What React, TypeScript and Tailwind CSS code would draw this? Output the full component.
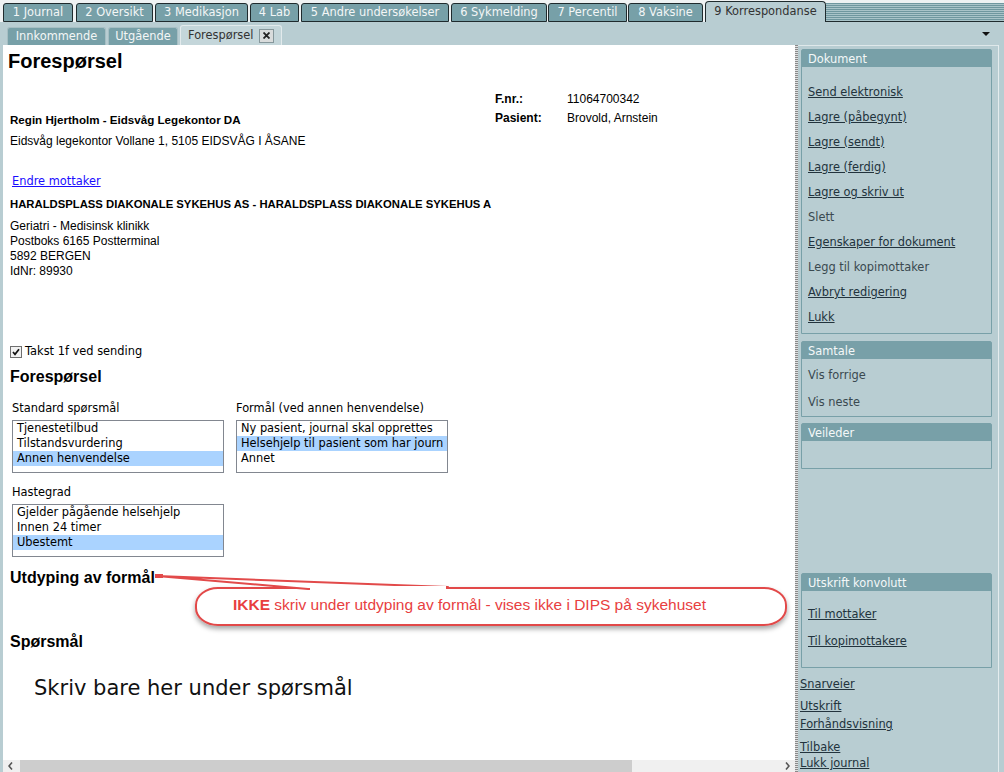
import clsx from "clsx";

const topTabs = [
  { label: "1 Journal", cls: "w-[70px] mr-[3px]" },
  { label: "2 Oversikt", cls: "w-[77px] mr-[2px]" },
  { label: "3 Medikasjon", cls: "w-[93px] mr-[2px]" },
  { label: "4 Lab", cls: "w-[49px] mr-[2px]" },
  { label: "5 Andre undersøkelser", cls: "w-[148px] mr-[2px]" },
  { label: "6 Sykmelding", cls: "w-[96px] mr-[1px]" },
  { label: "7 Percentil", cls: "w-[79px] mr-[1px]" },
  { label: "8 Vaksine", cls: "w-[75px] mr-[2px]" },
];

function ListBox({ items, selected }: { items: string[]; selected: number }) {
  return (
    <div className="w-[212px] h-[53px] border border-[#828790] bg-white overflow-hidden">
      {items.map((it, i) => (
        <div
          key={it}
          className={clsx(
            "h-[15px] leading-[15px] pl-[4px] whitespace-nowrap",
            i === selected && "bg-[#aad3ff]"
          )}
        >
          {it}
        </div>
      ))}
    </div>
  );
}

function PanelBox({
  title,
  className,
  children,
}: {
  title: string;
  className?: string;
  children?: React.ReactNode;
}) {
  return (
    <div className={clsx("w-[191px] border border-[#78a0a8] rounded-t-[2px]", className)}>
      <div className="h-[17px] leading-[18px] bg-[#78a0a8] text-[#f4f8f8] pl-[6px]">
        {title}
      </div>
      {children}
    </div>
  );
}

function Item({ label, link = true, h = "h-[25px]" }: { label: string; link?: boolean; h?: string }) {
  return (
    <div className={clsx("flex items-center pl-[6px]", h)}>
      <span className={link ? "underline text-[#22333d]" : "text-[#3a4950]"}>{label}</span>
    </div>
  );
}

export default function App() {
  return (
    <div className="w-[1004px] h-[772px] overflow-hidden bg-[#b8cdd2] font-['DejaVu_Sans',Verdana,sans-serif] text-[11.4px] flex flex-col">
      {/* Top tabs */}
      <div className="h-[22px] bg-[#eef2f3] flex items-end pl-[3px]">
        {topTabs.map((t) => (
          <div
            key={t.label}
            className={clsx(
              "h-[19px] border border-[#1f2b2e] rounded-t-[3px] bg-[#77a0a8] text-[#f3f6f6] flex items-center justify-center whitespace-nowrap",
              t.cls
            )}
          >
            {t.label}
          </div>
        ))}
        <div className="w-[121px] h-[21px] border border-b-0 border-[#1f2b2e] rounded-t-[4px] bg-[#b8cdd2] text-[#333] flex items-center justify-center">
          9 Korrespondanse
        </div>
        <div className="flex-1 h-[19px] border-b border-[#1f2b2e] bg-[repeating-linear-gradient(180deg,#6f979f_0px,#6f979f_1px,#a9c4c9_1px,#a9c4c9_2px)]" />
      </div>

      {/* Sub tabs */}
      <div className="h-[23px] flex items-end pl-[7px]">
        <div className="w-[99px] h-[18px] mr-[2px] border border-b-0 border-[#a6bec3] rounded-t-[3px] bg-[#77a0a8] text-[#f3f6f6] flex items-center justify-center">
          Innkommende
        </div>
        <div className="w-[70px] h-[18px] mr-[2px] border border-b-0 border-[#a6bec3] rounded-t-[3px] bg-[#77a0a8] text-[#f3f6f6] flex items-center justify-center">
          Utgående
        </div>
        <div className="w-[102px] h-[20px] border border-b-0 border-[#e2eaec] rounded-t-[3px] bg-[#c4d6da] text-[#333] flex items-center pl-[7px]">
          Forespørsel
          <span className="ml-[6px] w-[15px] h-[14px] border border-[#86979b] bg-[#d9dcdc] flex items-center justify-center">
            <svg width="7" height="7" viewBox="0 0 7 7">
              <path d="M0.5 0.5L6.5 6.5M6.5 0.5L0.5 6.5" stroke="#222" strokeWidth="1.8" />
            </svg>
          </span>
        </div>
        <svg className="ml-auto mr-[14px] mb-[9px]" width="8" height="4" viewBox="0 0 8 4">
          <path d="M0 0H8L4 4Z" fill="#111" />
        </svg>
      </div>

      {/* Main */}
      <div className="flex h-[727px]">
        <div className="ml-[3px] w-[792px] bg-white flex flex-col">
          <div className="flex-1 relative overflow-hidden pl-[7px] text-black">
            <div className="font-['Liberation_Sans',Arial,sans-serif] text-[20px] font-bold leading-[24px] mt-[4px] -ml-[2px]">
              Forespørsel
            </div>

            <div className="flex items-start font-['Liberation_Sans',Arial,sans-serif] text-[12px]">
              <div className="w-[485px] pt-[39px]">
                <div className="font-bold text-[11.6px] leading-[15px]">Regin Hjertholm - Eidsvåg Legekontor DA</div>
                <div className="leading-[15px] mt-[7px]">Eidsvåg legekontor Vollane 1, 5105 EIDSVÅG I ÅSANE</div>
              </div>
              <div className="pt-[17px] grid grid-cols-[72px_1fr] leading-[19px]">
                <span className="font-bold">F.nr.:</span>
                <span>11064700342</span>
                <span className="font-bold">Pasient:</span>
                <span>Brovold, Arnstein</span>
              </div>
            </div>

            <div className="mt-[25px] leading-[15px] pl-[2px]">
              <span className="text-[#1a0dff] underline">Endre mottaker</span>
            </div>
            <div className="mt-[8px] leading-[15px] font-['Liberation_Sans',Arial,sans-serif] text-[11.3px] font-bold whitespace-nowrap">
              HARALDSPLASS DIAKONALE SYKEHUS AS - HARALDSPLASS DIAKONALE SYKEHUS A
            </div>
            <div className="mt-[7px] leading-[15px] font-['Liberation_Sans',Arial,sans-serif] text-[12px]">
              <div>Geriatri - Medisinsk klinikk</div>
              <div>Postboks 6165 Postterminal</div>
              <div>5892 BERGEN</div>
              <div>IdNr: 89930</div>
            </div>

            <div className="mt-[66px] h-[14px] flex items-center">
              <span className="w-[12px] h-[12px] mt-[-1px] border border-[#6f6f6f] bg-[#f2f2f2] flex items-center justify-center">
                <svg width="8" height="8" viewBox="0 0 8 8">
                  <path d="M1 4L3 6.3L7 1.2" fill="none" stroke="#111" strokeWidth="1.7" />
                </svg>
              </span>
              <span className="ml-[3px]">Takst 1f ved sending</span>
            </div>

            <div className="mt-[8px] leading-[20px] font-['Liberation_Sans',Arial,sans-serif] text-[16px] font-bold">
              Forespørsel
            </div>

            <div className="mt-[14px] flex">
              <div className="pl-[2px]">
                <div className="leading-[14px]">Standard spørsmål</div>
                <div className="mt-[5px]">
                  <ListBox items={["Tjenestetilbud", "Tilstandsvurdering", "Annen henvendelse"]} selected={2} />
                </div>
              </div>
              <div className="ml-[12px]">
                <div className="leading-[14px]">Formål (ved annen henvendelse)</div>
                <div className="mt-[5px]">
                  <ListBox
                    items={["Ny pasient, journal skal opprettes", "Helsehjelp til pasient som har journ", "Annet"]}
                    selected={1}
                  />
                </div>
              </div>
            </div>

            <div className="mt-[12px] pl-[2px]">
              <div className="leading-[14px]">Hastegrad</div>
              <div className="mt-[5px]">
                <ListBox items={["Gjelder pågående helsehjelp", "Innen 24 timer", "Ubestemt"]} selected={2} />
              </div>
            </div>

            <div className="mt-[12px] leading-[18px] font-['Liberation_Sans',Arial,sans-serif] text-[16px] font-bold">
              Utdyping av formål
            </div>
            <div className="mt-[45px] leading-[20px] font-['Liberation_Sans',Arial,sans-serif] text-[16px] font-bold">
              Spørsmål
            </div>
            <div className="mt-[24px] leading-[24px] text-[21px] pl-[24px] text-[#111]">
              Skriv bare her under spørsmål
            </div>

            {/* Annotation callout */}
            <svg className="absolute left-[147px] top-[525px]" width="645" height="110" viewBox="0 0 645 110">
              <defs>
                <filter id="sh" x="-10%" y="-40%" width="120%" height="200%">
                  <feDropShadow dx="0" dy="3" stdDeviation="2.5" floodColor="#000" floodOpacity="0.35" />
                </filter>
              </defs>
              <rect x="46" y="18" width="590" height="37" rx="22" ry="17" fill="white" stroke="#e24a4a" strokeWidth="2" filter="url(#sh)" />
              <polygon points="7,6 298,17 158,19" fill="white" stroke="#e24a4a" strokeWidth="2" strokeLinejoin="round" />
              <rect x="160" y="16" width="136" height="4" fill="white" />
              <rect x="5" y="4" width="8" height="4" fill="#e24a4a" />
            </svg>
            <div className="absolute left-[230px] top-[552px] leading-[16px] font-['Liberation_Sans',Arial,sans-serif] text-[15.5px] text-[#e8403f] whitespace-nowrap">
              <span className="font-bold">IKKE</span> skriv under utdyping av formål - vises ikke i DIPS på sykehuset
            </div>
          </div>

          {/* Horizontal scrollbar */}
          <div className="h-[12px] bg-[#f0f0f0] flex items-center">
            <div className="w-[15px] flex justify-center">
              <svg width="5" height="8" viewBox="0 0 5 8">
                <path d="M4 0.5L1 4L4 7.5" fill="none" stroke="#555" strokeWidth="1.6" />
              </svg>
            </div>
            <div className="ml-[2px] w-[612px] h-full bg-[#cdcdcd]" />
            <div className="flex-1" />
            <div className="w-[15px] flex justify-center">
              <svg width="5" height="8" viewBox="0 0 5 8">
                <path d="M1 0.5L4 4L1 7.5" fill="none" stroke="#555" strokeWidth="1.6" />
              </svg>
            </div>
          </div>
        </div>

        {/* Splitter */}
        <div className="w-[3px] bg-[repeating-linear-gradient(0deg,#8a8a8a_0px,#8a8a8a_1px,#e0e0e0_1px,#e0e0e0_2px)]" />

        {/* Right panel */}
        <div className="w-[200px] border-t border-[#dfe8ea] pl-[3px] text-[#22333d]">
          <PanelBox title="Dokument" className="mt-[3px]">
            <div className="pt-[13px] pb-[3px]">
              <Item label="Send elektronisk" />
              <Item label="Lagre (påbegynt)" />
              <Item label="Lagre (sendt)" />
              <Item label="Lagre (ferdig)" />
              <Item label="Lagre og skriv ut" />
              <Item label="Slett" link={false} />
              <Item label="Egenskaper for dokument" />
              <Item label="Legg til kopimottaker" link={false} />
              <Item label="Avbryt redigering" />
              <Item label="Lukk" />
            </div>
          </PanelBox>
          <PanelBox title="Samtale" className="mt-[7px]">
            <div className="pt-[3px]">
              <Item label="Vis forrige" link={false} h="h-[27px]" />
              <Item label="Vis neste" link={false} h="h-[27px]" />
            </div>
          </PanelBox>
          <PanelBox title="Veileder" className="mt-[6px]">
            <div className="h-[27px]" />
          </PanelBox>
          <PanelBox title="Utskrift konvolutt" className="mt-[104px]">
            <div className="pt-[10px] pb-[12px]">
              <Item label="Til mottaker" h="h-[27px]" />
              <Item label="Til kopimottakere" h="h-[27px]" />
            </div>
          </PanelBox>
          <div className="-ml-[1px]">
            <div className="mt-[8px] leading-[16px] underline">Snarveier</div>
            <div className="mt-[5px] leading-[18px] underline">Utskrift</div>
            <div className="leading-[18px] underline">Forhåndsvisning</div>
            <div className="mt-[6px] leading-[16px] underline">Tilbake</div>
            <div className="leading-[16px] underline">Lukk journal</div>
          </div>
        </div>
        <div className="w-[1px] bg-[#e4ecee]" />
        <div className="flex-1" />
      </div>
    </div>
  );
}
